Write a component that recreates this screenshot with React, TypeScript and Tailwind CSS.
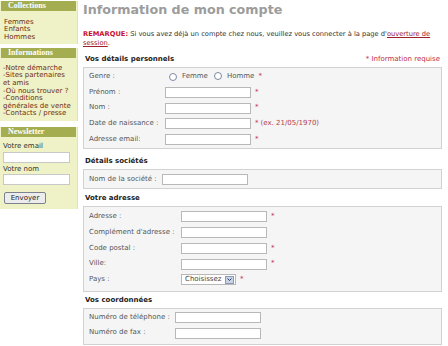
import React from 'react'

const font = { fontFamily: '"DejaVu Sans", Verdana, sans-serif' }

function SideBox({ title, className = '', children }: { title: string; className?: string; children: React.ReactNode }) {
    return (
        <div className={`bg-[#eef2c6] border-r border-[#dfe4b0] ${className}`}>
            <div className="h-[10px] mx-[1px] bg-[#a4ad4f] text-white font-bold text-[8px] leading-[10px] pl-[7px] font-['Liberation_Serif',serif]">
                {title}
            </div>
            {children}
        </div>
    )
}

function Star() {
    return <span className="text-[#c0304a] ml-[4px]">*</span>
}

function Input({ w = 'w-[86px]' }: { w?: string }) {
    return <div className={`${w} h-[11px] bg-white border border-[#b8b8b8]`} />
}

function Row({ label, left, children }: { label: string; left: string; children: React.ReactNode }) {
    return (
        <div className="h-[15.7px] flex items-center">
            <div className={left}>{label}</div>
            <div className="flex items-center">{children}</div>
        </div>
    )
}

function Section({ title, className, children }: { title: string; className: string; children: React.ReactNode }) {
    return (
        <div>
            <div className="font-bold text-[#222] text-[7px] h-[7px] leading-[7px] pl-[2px]">{title}</div>
            <div className={`mt-[4px] bg-[#f5f5f5] border border-[#d2d2d2] pl-[5px] text-[#555] ${className}`}>
                {children}
            </div>
        </div>
    )
}

function Radio() {
    return <span className="inline-block w-[8px] h-[8px] rounded-full border border-[#7d8aa3] bg-white" />
}

export default function App() {
    return (
        <div className="w-[448px] h-[346px] overflow-hidden bg-white flex text-[7px] leading-[7.5px]" style={font}>
            {/* sidebar */}
            <div className="w-[78px] shrink-0 flex flex-col pt-[1px]">
                <SideBox title="Collections">
                    <div className="text-[#6e2d12] pl-[4px] pt-[8px] pb-[3px] leading-[7.3px]">
                        <div>Femmes</div>
                        <div>Enfants</div>
                        <div>Hommes</div>
                    </div>
                </SideBox>
                <SideBox title="Informations" className="mt-[4px]">
                    <div className="text-[#6e2d12] pl-[3px] pr-[2px] pt-[7px] pb-[3px] leading-[7.6px]">
                        <div>-Notre démarche</div>
                        <div>-Sites partenaires<br />et amis</div>
                        <div>-Où nous trouver ?</div>
                        <div>-Conditions<br />générales de vente</div>
                        <div>-Contacts / presse</div>
                    </div>
                </SideBox>
                <SideBox title="Newsletter" className="mt-[6px]">
                    <div className="text-[#333] px-[3px] pt-[6px] pb-[5px]">
                        <div>Votre email</div>
                        <div className="mt-[1px] h-[11px] w-[67px] bg-white border border-[#c8c8c8]" />
                        <div className="mt-[3px]">Votre nom</div>
                        <div className="mt-[1px] h-[11px] w-[67px] bg-white border border-[#c8c8c8]" />
                        <button className="mt-[7px] ml-[1px] h-[12px] w-[42px] rounded-[2px] border border-[#7d8290] bg-[#ececec] text-[#222] text-[7px] leading-[10px]">
                            Envoyer
                        </button>
                    </div>
                </SideBox>
            </div>

            {/* main */}
            <div className="flex-1 pl-[5px] pr-[6px]">
                <h1 className="pt-[3px] h-[22px] text-[12.7px] leading-[14px] font-bold text-[#9c9c9c]">
                    Information de mon compte
                </h1>
                <div className="mt-[8px] text-[#333] text-[6.7px] leading-[9px] whitespace-nowrap">
                    <div>
                        <span className="font-bold text-[#c8102e]">REMARQUE:</span> Si vous avez déjà un compte chez nous, veuillez vous connecter à la page d'<span className="underline text-[#a0202a]">ouverture de</span>
                    </div>
                    <div>
                        <span className="underline text-[#a0202a]">session</span>.
                    </div>
                </div>

                <div className="mt-[8px]">
                    <div className="flex justify-between pr-[2px]">
                        <div className="font-bold text-[#222] text-[7px] leading-[7px] pl-[2px]">Vos détails personnels</div>
                        <div className="text-[#c0304a] leading-[7px]">* Information requise</div>
                    </div>
                    <div className="mt-[4px] bg-[#f5f5f5] border border-[#d2d2d2] pl-[5px] text-[#555] pt-[1px] pb-[1px]">
                        <Row label="Genre :" left="w-[80px]">
                            <Radio />
                            <span className="ml-[5px]">Femme</span>
                            <span className="ml-[6px]"><Radio /></span>
                            <span className="ml-[5px]">Homme</span>
                            <Star />
                        </Row>
                        <Row label="Prénom :" left="w-[76px]"><Input /><Star /></Row>
                        <Row label="Nom :" left="w-[76px]"><Input /><Star /></Row>
                        <Row label="Date de naissance :" left="w-[76px]">
                            <Input /><Star /><span className="text-[#b04050] ml-[2px]">(ex. 21/05/1970)</span>
                        </Row>
                        <Row label="Adresse email:" left="w-[76px]"><Input /><Star /></Row>
                    </div>
                </div>

                <div className="mt-[9px]">
                    <Section title="Détails sociétés" className="py-[1px]">
                        <Row label="Nom de la société :" left="w-[73px]"><Input /></Row>
                    </Section>
                </div>

                <div className="mt-[6px]">
                    <Section title="Votre adresse" className="pt-[2px] pb-[3px]">
                        <Row label="Adresse :" left="w-[92px]"><Input /><Star /></Row>
                        <Row label="Complément d'adresse :" left="w-[92px]"><Input /></Row>
                        <Row label="Code postal :" left="w-[92px]"><Input /><Star /></Row>
                        <Row label="Ville:" left="w-[92px]"><Input /><Star /></Row>
                        <Row label="Pays :" left="w-[92px]">
                            <div className="w-[55px] h-[11px] bg-white border border-[#b8b8b8] flex items-center justify-between pl-[3px] pr-[1px] text-[#444]">
                                <span>Choisissez</span>
                                <span className="w-[9px] h-[8px] bg-[#c9d3e6] border border-[#8c9ab8] flex items-center justify-center">
                                    <svg width="5" height="3" viewBox="0 0 5 3"><path d="M0.5 0.5 L2.5 2.5 L4.5 0.5" stroke="#2a3a66" strokeWidth="1" fill="none" /></svg>
                                </span>
                            </div>
                            <Star />
                        </Row>
                    </Section>
                </div>

                <div className="mt-[5px]">
                    <Section title="Vos coordonnées" className="pt-[1px] pb-[3px]">
                        <Row label="Numéro de téléphone :" left="w-[86px]"><Input /></Row>
                        <Row label="Numéro de fax :" left="w-[86px]"><Input /></Row>
                    </Section>
                </div>
            </div>
        </div>
    )
}
